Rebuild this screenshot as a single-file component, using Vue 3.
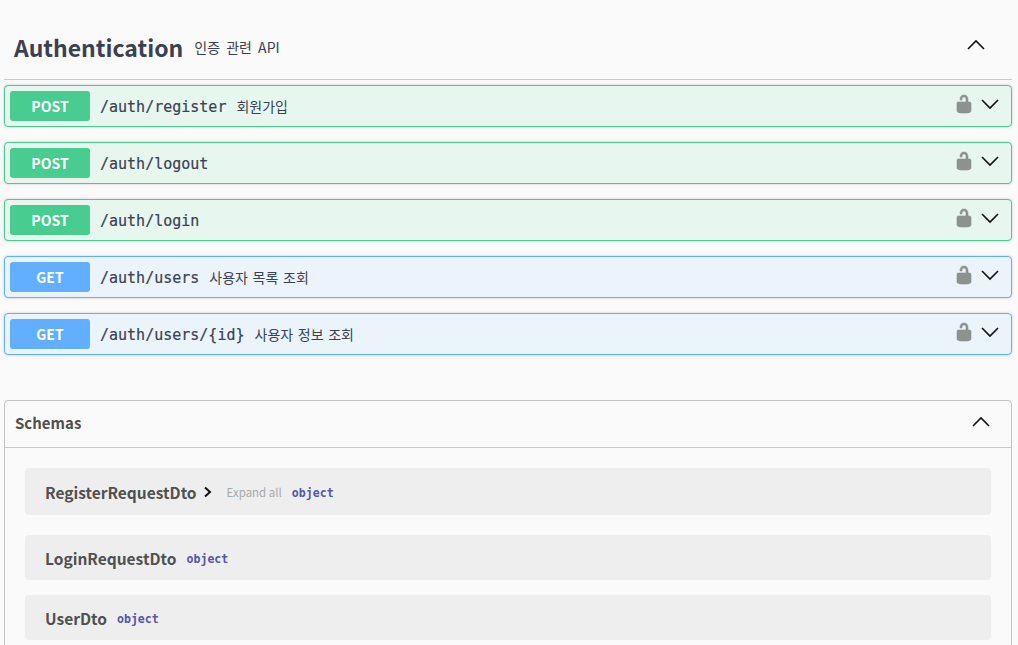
<script setup>
const operations = [
  { method: 'POST', path: '/auth/register', summary: '회원가입' },
  { method: 'POST', path: '/auth/logout', summary: '' },
  { method: 'POST', path: '/auth/login', summary: '' },
  { method: 'GET', path: '/auth/users', summary: '사용자 목록 조회' },
  { method: 'GET', path: '/auth/users/{id}', summary: '사용자 정보 조회' }
]

const models = [
  { name: 'RegisterRequestDto', expandable: true },
  { name: 'LoginRequestDto', expandable: false },
  { name: 'UserDto', expandable: false }
]
</script>

<template>
  <div class="page">
    <header class="tag">
      <h3 class="tag-name">Authentication</h3>
      <span class="tag-desc">인증 관련 API</span>
      <svg class="arrow tag-arrow" width="20" height="20" viewBox="0 0 20 20">
        <path d="M2 14 L10 6 L18 14" />
      </svg>
    </header>

    <div class="operations">
      <div
        v-for="op in operations"
        :key="op.path"
        :class="['operation', op.method.toLowerCase()]"
      >
        <span class="method">{{ op.method }}</span>
        <span class="path">{{ op.path }}</span>
        <span v-if="op.summary" class="summary">{{ op.summary }}</span>
        <svg class="lock" width="20" height="20" viewBox="0 0 20 20">
          <path d="M15.8 8H14V5.6C14 2.703 12.665 1 10 1 7.334 1 6 2.703 6 5.6V6h2v-.801C8 3.754 8.797 3 10 3c1.203 0 2 .754 2 2.199V8H4c-.553 0-1 .646-1 1.199V17c0 .549.428 1.139.951 1.307l1.197.387C5.672 18.861 6.45 19 7 19h6c.55 0 1.327-.139 1.852-.307l1.197-.387c.523-.168.951-.758.951-1.307V9.199C17 8.646 16.352 8 15.8 8z" />
        </svg>
        <svg class="arrow" width="20" height="20" viewBox="0 0 20 20">
          <path d="M2 6 L10 14 L18 6" />
        </svg>
      </div>
    </div>

    <section class="schemas">
      <div class="schemas-head">
        <h4>Schemas</h4>
        <svg class="arrow" width="20" height="20" viewBox="0 0 20 20">
          <path d="M2 14 L10 6 L18 14" />
        </svg>
      </div>
      <div class="model-list">
        <div
          v-for="model in models"
          :key="model.name"
          :class="['model', { expandable: model.expandable }]"
        >
          <span class="model-name">{{ model.name }}</span>
          <template v-if="model.expandable">
            <svg class="model-toggle" width="12" height="12" viewBox="0 0 12 12">
              <path d="M3 1.5 L8 6 L3 10.5" />
            </svg>
            <span class="expand-all">Expand all</span>
          </template>
          <span class="model-type">object</span>
        </div>
      </div>
    </section>
  </div>
</template>

<style>
html,
body {
  margin: 0;
  background: #fafafa;
  overflow: hidden;
}
</style>

<style scoped>
.page {
  width: 1018px;
  height: 645px;
  overflow: hidden;
  box-sizing: border-box;
  padding: 16px 6px 0 4px;
  background: #fafafa;
  font-family: "Noto Sans CJK KR", sans-serif;
}

.tag {
  display: flex;
  align-items: center;
  height: 64px;
  box-sizing: border-box;
  padding: 0 26px 0 10px;
  border-bottom: 1px solid #c8c9cc;
}

.tag-name {
  margin: -2px 0 0;
  font-size: 23px;
  font-weight: 700;
  color: #3b4151;
}

.tag-desc {
  margin-left: 11px;
  margin-top: -2px;
  font-size: 14px;
  word-spacing: 3px;
  color: #3b4151;
}

.tag-arrow {
  margin-left: auto;
  margin-top: -5px;
}

.arrow path {
  fill: none;
  stroke: #111;
  stroke-width: 1.6;
}

.operations {
  display: flex;
  flex-direction: column;
  gap: 15px;
  margin-top: 5px;
}

.operation {
  display: flex;
  align-items: center;
  height: 42px;
  box-sizing: border-box;
  padding: 0 11px 0 5px;
  border: 1px solid;
  border-radius: 4px;
  box-shadow: 0 0 3px rgba(0, 0, 0, 0.19);
}

.operation.post {
  background: #e8f6f0;
  border-color: #49cc90;
}

.operation.get {
  background: #ebf3fb;
  border-color: #61affe;
}

.method {
  width: 80px;
  height: 30px;
  flex: none;
  line-height: 30px;
  text-align: center;
  border-radius: 3px;
  color: #fff;
  font-size: 14px;
  font-weight: 700;
}

.post .method {
  background: #49cc90;
}

.get .method {
  background: #61affe;
}

.path {
  margin-left: 10px;
  margin-top: 1px;
  font-family: "DejaVu Sans Mono", monospace;
  font-size: 15px;
  font-weight: 500;
  -webkit-text-stroke: 0.2px #3b4151;
  color: #3b4151;
}

.summary {
  margin-left: 10px;
  font-size: 14px;
  word-spacing: 1.5px;
  color: #3b4151;
}

.lock {
  margin-left: auto;
  margin-right: 6px;
  margin-top: -4px;
  fill: #8b9290;
  stroke: #8b9290;
  stroke-width: 0.6;
}

.operation .arrow {
  margin-top: -4px;
}

.schemas {
  margin-top: 45px;
  height: 300px;
  border: 1px solid #c4c4c6;
  border-radius: 4px;
}

.schemas-head {
  display: flex;
  align-items: center;
  justify-content: space-between;
  height: 46px;
  padding: 0 20px 0 10px;
  border-bottom: 1px solid #c8c9cc;
}

.schemas-head h4 {
  margin: -4px 0 0;
  font-size: 15px;
  font-weight: 700;
  color: #505050;
}

.schemas-head .arrow {
  margin-top: -4px;
}

.model-list {
  display: flex;
  flex-direction: column;
  gap: 15px;
  padding: 20px 20px 0;
}

.model {
  display: flex;
  align-items: center;
  height: 45px;
  padding: 0 20px;
  border-radius: 4px;
  background: #eeeeee;
}

.model.expandable {
  height: 47px;
  margin-bottom: 5px;
}

.model-name {
  font-size: 15.5px;
  font-weight: 700;
  color: #505050;
}

.model-toggle {
  margin-left: 5px;
}

.model-toggle path {
  fill: none;
  stroke: #111;
  stroke-width: 2;
}

.expand-all {
  margin-left: 13px;
  font-size: 11.5px;
  color: #a8a8a8;
}

.model-type {
  margin-left: 10px;
  margin-top: 2px;
  font-family: "DejaVu Sans Mono", monospace;
  font-size: 11.6px;
  font-weight: 700;
  color: #55a;
}
</style>
